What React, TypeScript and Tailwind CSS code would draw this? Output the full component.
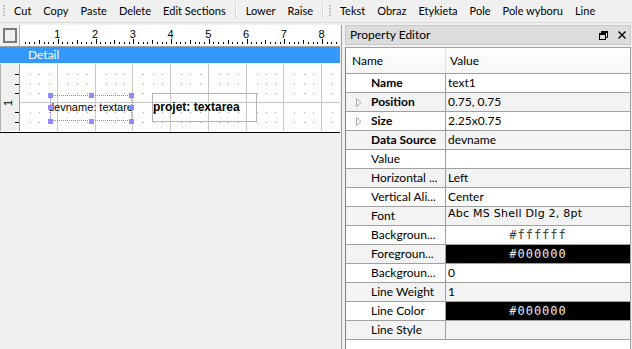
import React from 'react';

const ui = "font-['Lato',sans-serif] text-[12px] text-black";

interface PropRow {
  label: string;
  bold?: boolean;
  arrow?: boolean;
  value?: string;
  color?: string;
  fontValue?: boolean;
}

const rows: PropRow[] = [
  { label: 'Name', bold: true, value: 'text1' },
  { label: 'Position', bold: true, arrow: true, value: '0.75, 0.75' },
  { label: 'Size', bold: true, arrow: true, value: '2.25x0.75' },
  { label: 'Data Source', bold: true, value: 'devname' },
  { label: 'Value', value: '' },
  { label: 'Horizontal ...', value: 'Left' },
  { label: 'Vertical Ali...', value: 'Center' },
  { label: 'Font', value: 'Abc MS Shell Dlg 2, 8pt', fontValue: true },
  { label: 'Backgroun...', color: '#ffffff' },
  { label: 'Foregroun...', color: '#000000' },
  { label: 'Backgroun...', value: '0' },
  { label: 'Line Weight', value: '1' },
  { label: 'Line Color', color: '#000000' },
  { label: 'Line Style', value: '' },
];

const INCH = 37.75;

function Grip() {
  return (
    <svg width="3" height="12" className="mx-[2px] shrink-0">
      {[0, 3, 6, 9].map((y) => (
        <rect key={y} x="0" y={y} width="2" height="2" fill="#c4c4c4" />
      ))}
    </svg>
  );
}

function Sep() {
  return <div className="w-[2px] h-[16px] mx-[3px] border-l border-[#d5d5d5] border-r border-r-white shrink-0" />;
}

function ToolButton({ label }: { label: string }) {
  return <div className="px-[6px] leading-[22px] whitespace-nowrap">{label}</div>;
}

function Toolbar() {
  return (
    <div className="h-[23px] flex items-center border-b border-[#dcdcdc] pl-[1px] text-[11px]">
      <Grip />
      <ToolButton label="Cut" />
      <ToolButton label="Copy" />
      <ToolButton label="Paste" />
      <ToolButton label="Delete" />
      <ToolButton label="Edit Sections" />
      <Sep />
      <ToolButton label="Lower" />
      <ToolButton label="Raise" />
      <Sep />
      <Grip />
      <ToolButton label="Tekst" />
      <ToolButton label="Obraz" />
      <ToolButton label="Etykieta" />
      <ToolButton label="Pole" />
      <ToolButton label="Pole wyboru" />
      <ToolButton label="Line" />
    </div>
  );
}

function HRuler() {
  const ticks = [];
  for (let i = 1; i < 68; i++) {
    const x = Math.round(i * (INCH / 8)) + 0.5;
    const isInch = i % 8 === 0;
    const isHalf = i % 4 === 0;
    ticks.push(
      <line key={i} x1={x} x2={x} y1={isInch ? 14 : isHalf ? 15 : 17} y2={19} stroke="#000" strokeWidth="1" />
    );
  }
  return (
    <svg width="320" height="21" className="block">
      <rect width="320" height="21" fill="#ffffff" />
      {ticks}
      {[1, 2, 3, 4, 5, 6, 7, 8].map((n) => (
        <text key={n} x={n * INCH - 0.5} y="13" fontSize="11" textAnchor="middle" fontFamily="Liberation Sans, sans-serif" fill="#000">
          {n}
        </text>
      ))}
    </svg>
  );
}

function VRuler() {
  const marks = [10, 19.5, 29, 48, 57.5];
  return (
    <div className="relative w-[20px] h-full bg-[#f0f0f0] border-r border-[#a0a0a0] border-l border-l-[#b0b0b0]">
      <svg width="19" height="67" className="block">
        {marks.map((y) => (
          <line key={y} x1="14" x2="18" y1={Math.round(y) + 0.5} y2={Math.round(y) + 0.5} stroke="#000" />
        ))}
        <text x="8" y="39" fontSize="11" textAnchor="middle" fontFamily="Liberation Sans, sans-serif" transform="rotate(-90 8 39)" dominantBaseline="middle">
          1
        </text>
      </svg>
    </div>
  );
}

function CanvasGrid() {
  const lines = [];
  for (let k = 1; k <= 8; k++) {
    const x = Math.round(k * INCH) - 0.5;
    lines.push(<line key={'v' + k} x1={x} x2={x} y1="0" y2="67" stroke="#c8c8c8" />);
  }
  const dots = [];
  for (let i = 0; i < 34; i++) {
    if (i % 4 === 3) continue;
    const x = Math.round(10 + i * (INCH / 4));
    for (const y of [10, 20, 29, 48, 58]) {
      dots.push(<rect key={i + '-' + y} x={x} y={y} width="1" height="1" fill="#a8a8a8" />);
    }
  }
  return (
    <svg width="320" height="67" className="absolute inset-0">
      <rect width="320" height="67" fill="#ffffff" />
      {dots}
      {lines}
      <line x1="0" x2="320" y1="38.5" y2="38.5" stroke="#c8c8c8" />
    </svg>
  );
}

function Handle({ x, y }: { x: number; y: number }) {
  return <div className="absolute w-[5px] h-[5px] bg-[#8c8cff]" style={{ left: x, top: y }} />;
}

function Designer() {
  return (
    <div className="w-[340px] flex flex-col">
      <div className="h-[21px] flex">
        <div className="w-[20px] h-full bg-[#f0f0f0] flex items-center justify-center border-r border-[#b0b0b0]">
          <div className="w-[14px] h-[15px] border-2 border-[#7a7a7a]" />
        </div>
        <HRuler />
      </div>
      <div className="h-[1px] bg-[#a0a0a0]" />
      <div className="h-[16px] bg-[#3399ff] text-white pl-[28px] leading-[16px]">Detail</div>
      <div className="h-[1px] bg-[#f0f0f0]" />
      <div className="h-[67px] flex">
        <VRuler />
        <div className="relative flex-1 overflow-hidden">
          <CanvasGrid />
          <div className="absolute left-[30px] top-[31px] w-[82px] h-[26px] border border-dotted border-[#8080ff]" />
          <div className="absolute left-[28px] top-[35px] w-[85px] h-[16px] overflow-hidden whitespace-nowrap font-['Liberation_Sans',sans-serif] text-[11px] leading-[16px]">
            devname: textarea
          </div>
          <Handle x={28} y={29} />
          <Handle x={69} y={29} />
          <Handle x={109} y={29} />
          <Handle x={28} y={41} />
          <Handle x={109} y={41} />
          <Handle x={28} y={55} />
          <Handle x={69} y={55} />
          <Handle x={109} y={55} />
          <div className="absolute left-[132px] top-[29px] w-[105px] h-[29px] border border-[#b4b4b4]" />
          <div className="absolute left-[133px] top-[35px] whitespace-nowrap font-['Liberation_Sans',sans-serif] font-bold text-[12px] leading-[16px]">
            projet: textarea
          </div>
        </div>
      </div>
      <div className="h-[1px] bg-white" />
      <div className="h-[1px] bg-black" />
    </div>
  );
}

function FloatIcon() {
  return (
    <svg width="9" height="9" viewBox="0 0 9 9" className="block">
      <path d="M2.5 2.5V0.5H8.5V6.5H6.5" fill="none" stroke="#000" />
      <rect x="2" y="0" width="7" height="2" fill="#000" />
      <rect x="0.5" y="2.5" width="6" height="6" fill="#dcdcdc" stroke="#000" />
      <rect x="0" y="2" width="7" height="2" fill="#000" />
    </svg>
  );
}

function CloseIcon() {
  return (
    <svg width="8" height="8" viewBox="0 0 8 8" className="block">
      <path d="M0.5 0.5L7.5 7.5M7.5 0.5L0.5 7.5" stroke="#000" strokeWidth="1.4" />
    </svg>
  );
}

function Arrow() {
  return (
    <svg width="6" height="9" viewBox="0 0 6 9" className="block">
      <path d="M0.5 0.5L5 4.5L0.5 8.5Z" fill="#fff" stroke="#a8a8a8" />
    </svg>
  );
}

function PropertyRow({ row, odd }: { row: PropRow; odd: boolean }) {
  const bg = odd ? 'bg-[#f3f3f3]' : 'bg-white';
  return (
    <div className={`h-[19px] flex border-b border-[#a0a0a0] ${bg}`}>
      <div className="w-[100px] flex items-center border-r border-[#a0a0a0] shrink-0">
        <div className="w-[25px] pl-[10px] flex items-center">{row.arrow && <Arrow />}</div>
        <span className={`whitespace-nowrap ${row.bold ? 'font-bold' : ''}`}>{row.label}</span>
      </div>
      {row.color ? (
        <div
          className={`flex-1 flex items-center justify-center font-['DejaVu_Sans_Mono',monospace] text-[12px] tracking-[1px] ${
            row.color === '#000000' ? 'bg-black text-[#e8e8e8]' : 'bg-white text-[#404040]'
          }`}
        >
          {row.color}
        </div>
      ) : (
        <div
          className={`flex-1 pl-[2px] flex items-center whitespace-nowrap ${
            row.fontValue ? "font-['DejaVu_Sans',sans-serif] text-[11px] tracking-[0.25px] pb-[3px]" : ''
          }`}
        >
          {row.value}
        </div>
      )}
    </div>
  );
}

function PropertyEditor() {
  return (
    <div className="flex-1 flex flex-col pr-[1px]">
      <div className="h-[20px] bg-[#dcdcdc] border border-[#c8c8c8] flex items-center pl-[4px] pr-[4px]">
        <span className="flex-1">Property Editor</span>
        <div className="flex items-center gap-[10px]">
          <FloatIcon />
          <CloseIcon />
        </div>
      </div>
      <div className="h-[2px]" />
      <div className="flex-1 bg-white border-l border-t border-r border-[#a0a0a0] border-l-[#828282]">
        <div className="h-[26px] flex border-b border-[#a0a0a0] bg-gradient-to-b from-white to-[#f6f6f6]">
          <div className="w-[100px] pl-[6px] flex items-center border-r border-[#e2e2e2]">Name</div>
          <div className="flex-1 pl-[4px] flex items-center">Value</div>
        </div>
        {rows.map((row, i) => (
          <PropertyRow key={i} row={row} odd={i % 2 === 1} />
        ))}
      </div>
    </div>
  );
}

export default function App() {
  return (
    <div className={`w-[632px] h-[349px] bg-[#f0f0f0] flex flex-col overflow-hidden ${ui}`}>
      <Toolbar />
      <div className="flex-1 flex pt-[2px]">
        <Designer />
        <div className="w-[4px] border-l border-[#a0a0a0] shrink-0 ml-[1px]" />
        <PropertyEditor />
      </div>
    </div>
  );
}
